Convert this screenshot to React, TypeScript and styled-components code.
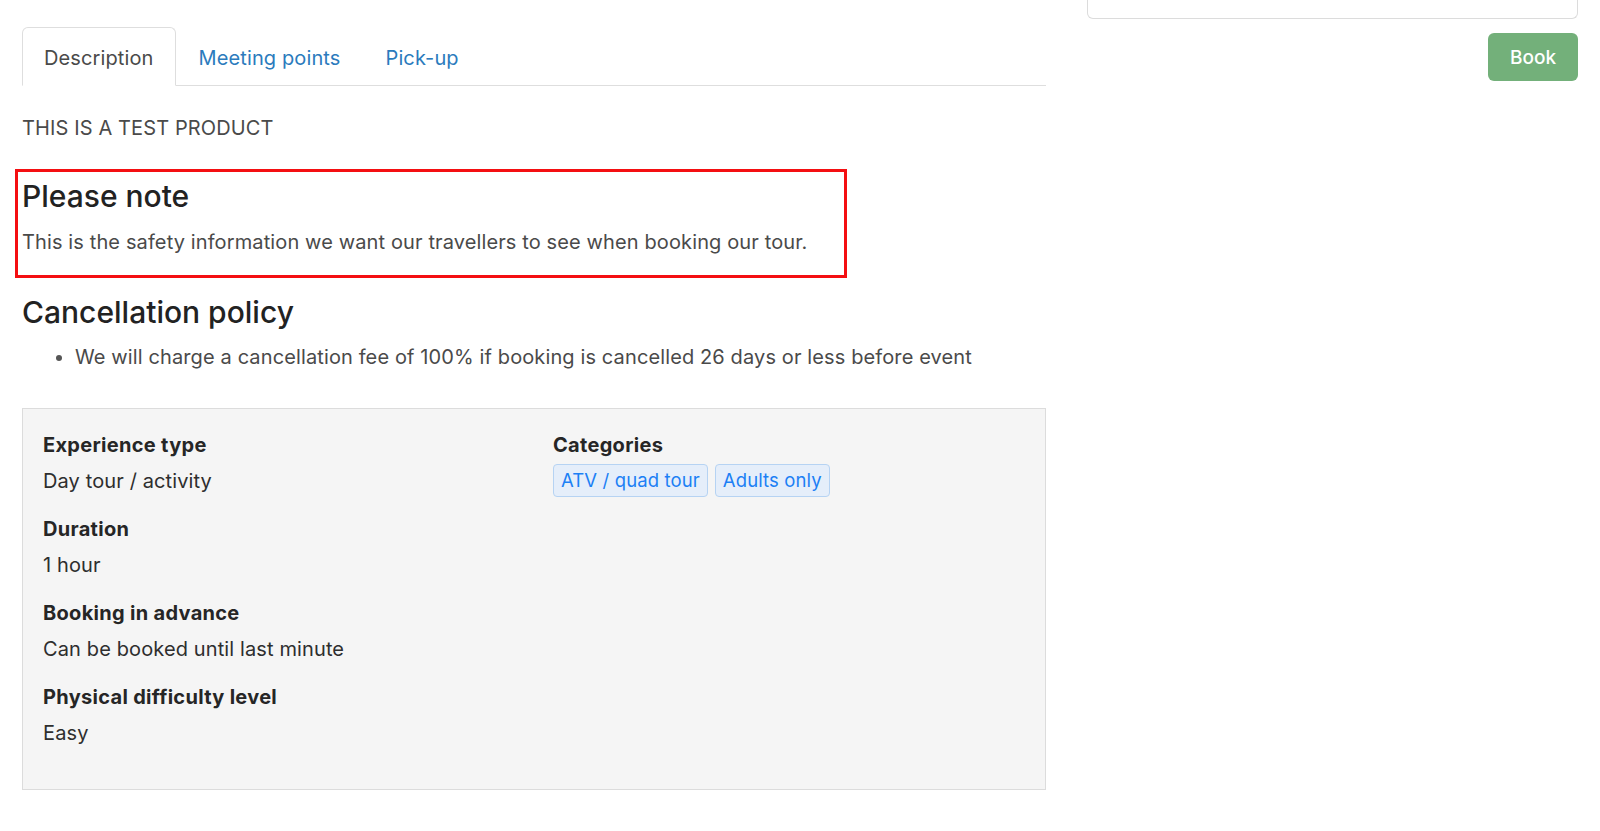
import React from "react";
import styled, { createGlobalStyle } from "styled-components";

const GlobalStyle = createGlobalStyle`
  html, body {
    margin: 0;
    padding: 0;
    background: #fff;
  }
  body {
    font-family: Inter, "Liberation Sans", Arial, sans-serif;
    font-size: 20px;
    line-height: 30px;
    letter-spacing: 0.12px;
    color: #4a4a4a;
  }
`;

const Page = styled.div`
  display: grid;
  grid-template-columns: 1024px 491px;
  column-gap: 41px;
  padding: 0 22px 0 22px;
  align-items: start;
`;

const Main = styled.div`
  padding-top: 27px;
`;

const Side = styled.div`
  display: flex;
  flex-direction: column;
  align-items: flex-end;
`;

const FieldStub = styled.div`
  align-self: stretch;
  height: 18px;
  border: 1px solid #dcdcdc;
  border-top: none;
  border-radius: 0 0 6px 6px;
`;

const BookButton = styled.button`
  margin-top: 14px;
  width: 90px;
  height: 48px;
  border: none;
  border-radius: 6px;
  background: #73b07a;
  color: #fff;
  font-family: inherit;
  font-size: 19px;
  font-weight: 500;
  cursor: pointer;
`;

const Tabs = styled.div`
  display: flex;
  gap: 1px;
  border-bottom: 1.5px solid #dedede;
`;

const Tab = styled.div<{ $active?: boolean }>`
  padding: 15px 21px 12px;
  margin-bottom: -1.5px;
  border: 1.5px solid ${({ $active }) => ($active ? "#dedede" : "transparent")};
  border-bottom-color: ${({ $active }) => ($active ? "#fff" : "transparent")};
  border-radius: 6px 6px 0 0;
  background: ${({ $active }) => ($active ? "#fff" : "transparent")};
  background-clip: padding-box;
  color: ${({ $active }) => ($active ? "#4a4a4a" : "#2b7bbd")};
  cursor: pointer;
`;

const Lead = styled.p`
  margin: 27px 0 0;
  color: #4a4a4a;
`;

const Note = styled.div`
  margin: 26px 0 0 -7px;
  padding: 6px 15px 18px 4px;
  border: 3px solid #f40f12;
  width: 832px;
  box-sizing: border-box;
`;

const Heading = styled.h4`
  margin: 0;
  font-size: 30px;
  line-height: 36px;
  font-weight: 500;
  letter-spacing: 0;
  color: #222;
`;

const NoteText = styled.p`
  margin: 13px 0 0;
`;

const PolicyHeading = styled(Heading)`
  margin-top: 16px;
`;

const PolicyList = styled.ul`
  margin: 12px 0 0;
  padding-left: 53px;
  li::marker {
    color: #555;
  }
`;

const InfoBox = styled.div`
  margin-top: 36px;
  display: grid;
  grid-template-columns: 510px 1fr;
  padding: 21px 20px 41px;
  background: #f5f5f5;
  border: 1.5px solid #dcdcdc;
`;

const Column = styled.div`
  display: flex;
  flex-direction: column;
`;

const Label = styled.div`
  font-weight: 650;
  letter-spacing: 0.3px;
  color: #262626;
`;

const Value = styled.div`
  margin-top: 6px;
  margin-bottom: 18px;
  color: #2e2e2e;
  &:last-child {
    margin-bottom: 0;
  }
`;

const TagRow = styled.div`
  display: flex;
  gap: 7px;
  margin-top: 4px;
`;

const Tag = styled.span`
  display: inline-block;
  padding: 0 7px;
  font-size: 18.5px;
  line-height: 31px;
  background: #e5eefa;
  border: 1.5px solid #b6d3f3;
  border-radius: 4px;
  color: #1c80f5;
`;

const details = [
  { label: "Experience type", value: "Day tour / activity" },
  { label: "Duration", value: "1 hour" },
  { label: "Booking in advance", value: "Can be booked until last minute" },
  { label: "Physical difficulty level", value: "Easy" },
];

const tabs = ["Description", "Meeting points", "Pick-up"];

export default function App() {
  return (
    <>
      <GlobalStyle />
      <Page>
        <Main>
          <Tabs>
            {tabs.map((t, i) => (
              <Tab key={t} $active={i === 0}>
                {t}
              </Tab>
            ))}
          </Tabs>
          <Lead>THIS IS A TEST PRODUCT</Lead>
          <Note>
            <Heading>Please note</Heading>
            <NoteText>This is the safety information we want our travellers to see when booking our tour.</NoteText>
          </Note>
          <PolicyHeading>Cancellation policy</PolicyHeading>
          <PolicyList>
            <li>We will charge a cancellation fee of 100% if booking is cancelled 26 days or less before event</li>
          </PolicyList>
          <InfoBox>
            <Column>
              {details.map((d) => (
                <React.Fragment key={d.label}>
                  <Label>{d.label}</Label>
                  <Value>{d.value}</Value>
                </React.Fragment>
              ))}
            </Column>
            <Column>
              <Label>Categories</Label>
              <TagRow>
                <Tag>ATV / quad tour</Tag>
                <Tag>Adults only</Tag>
              </TagRow>
            </Column>
          </InfoBox>
        </Main>
        <Side>
          <FieldStub />
          <BookButton>Book</BookButton>
        </Side>
      </Page>
    </>
  );
}
